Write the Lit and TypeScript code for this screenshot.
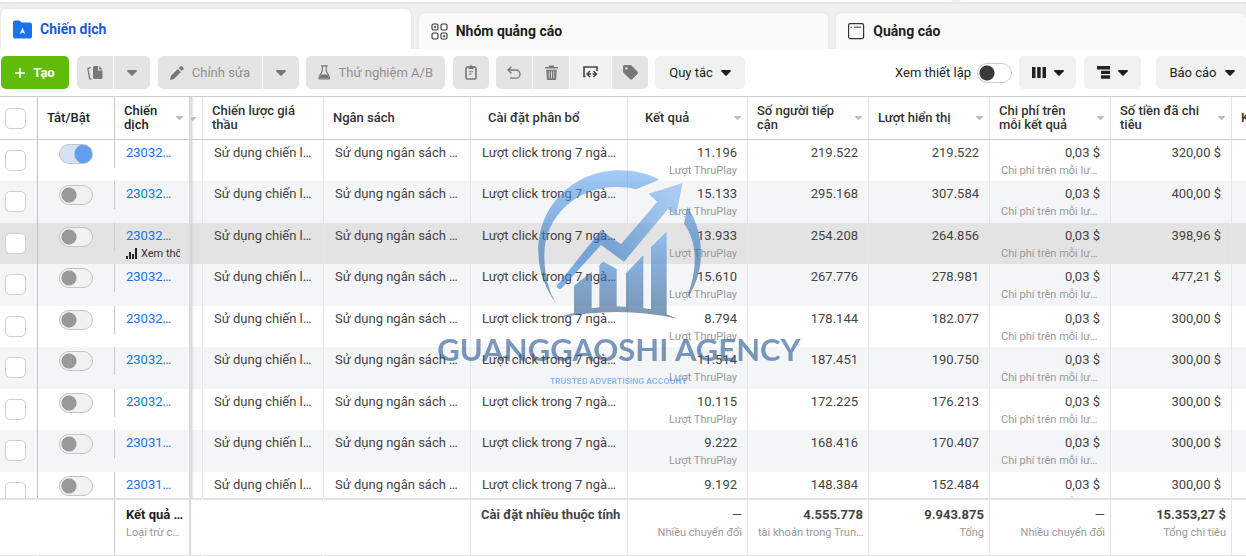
import { LitElement, html, css, svg, nothing } from "lit";
import { customElement, property, state } from "lit/decorators.js";
import { classMap } from "lit/directives/class-map.js";

interface Campaign {
  id: string;
  on: boolean;
  results: string;
  reach: string;
  impressions: string;
  spent: string;
}

const CAMPAIGNS: Campaign[] = [
  { id: "23032…", on: true, results: "11.196", reach: "219.522", impressions: "219.522", spent: "320,00 $" },
  { id: "23032…", on: false, results: "15.133", reach: "295.168", impressions: "307.584", spent: "400,00 $" },
  { id: "23032…", on: false, results: "13.933", reach: "254.208", impressions: "264.856", spent: "398,96 $" },
  { id: "23032…", on: false, results: "15.610", reach: "267.776", impressions: "278.981", spent: "477,21 $" },
  { id: "23032…", on: false, results: "8.794", reach: "178.144", impressions: "182.077", spent: "300,00 $" },
  { id: "23032…", on: false, results: "11.514", reach: "187.451", impressions: "190.750", spent: "300,00 $" },
  { id: "23032…", on: false, results: "10.115", reach: "172.225", impressions: "176.213", spent: "300,00 $" },
  { id: "23031…", on: false, results: "9.222", reach: "168.416", impressions: "170.407", spent: "300,00 $" },
  { id: "23031…", on: false, results: "9.192", reach: "148.384", impressions: "152.484", spent: "300,00 $" },
];

const icons = {
  folder: svg`<path d="M0 2.500A2 2 0 0 1 2 .5h4.500l2 2H17a2 2 0 0 1 2 2V16.500a2 2 0 0 1-2 2H2a2 2 0 0 1-2-2z" fill="#1a73e8"/><path d="M6.800 14 9.500 7.500 12.200 14 9.500 12.600z" fill="#fff"/>`,
  adset: svg`<g fill="none" stroke="#333" stroke-width="1.100"><rect x="1" y="1" width="6" height="6" rx="1.500"/><rect x="10" y="1" width="6" height="6" rx="1.500"/><rect x="1" y="10" width="6" height="6" rx="1.500"/><rect x="10" y="10" width="6" height="6" rx="1.500"/></g><path d="M3.200 3.200h1.800v1.800H3.200zM12.200 12.200h1.800v1.800h-1.800z" fill="#333"/>`,
  ad: svg`<rect x=".6" y=".6" width="15" height="15" rx="1.500" fill="none" stroke="#333" stroke-width="1.200"/><path d="M2.500 4.200h1.500M6 4.200h7" stroke="#333" stroke-width="1"/>`,
  plus: svg`<path d="M5 0v10M0 5h10" stroke="#fff" stroke-width="1.600"/>`,
  copy: svg`<path d="M6 1.500A1.500 1.500 0 0 1 7.500 0H11v4.500h4.500v7A1.500 1.500 0 0 1 14 13H7.500A1.500 1.500 0 0 1 6 11.500zM12 0l3.500 3.500H12z" fill="#777"/><path d="M4 1.600 1.800 2.100a1 1 0 0 0-.8 1.200l1.600 9a1 1 0 0 0 1.200.8l.8-.2" fill="none" stroke="#777" stroke-width="1.300"/>`,
  caret: svg`<path d="M.8 0h8.400a.8.8 0 0 1 .6 1.300L5.700 5.500a1 1 0 0 1-1.400 0L.2 1.300A.8.8 0 0 1 .8 0z" fill="currentColor"/>`,
  sort: svg`<path d="M.6 0h5.800a.5.5 0 0 1 .4.900L4 3.800a.7.7 0 0 1-1 0L.2.9A.5.5 0 0 1 .6 0z" fill="#bbbfc4"/>`,
  pencil: svg`<path d="M0 14l.9-4L8 2.900 11.100 6 4 13.100zM9 1.900 10.500.4a1.200 1.200 0 0 1 1.700 0l1.400 1.400a1.200 1.200 0 0 1 0 1.700L12.100 5z" fill="#777"/>`,
  flask: svg`<path d="M3 .7h7M4.500.7v5L1.200 12.300a1.200 1.200 0 0 0 1.100 1.900h8.400a1.200 1.200 0 0 0 1.100-1.900L8.500 5.700v-5" fill="none" stroke="#777" stroke-width="1.200"/><path d="M3.300 9.500h6.400l2 4.200H1.300z" fill="#777"/>`,
  clipboard: svg`<rect x="1" y="2" width="10" height="12" rx="1.500" fill="none" stroke="#777" stroke-width="1.600"/><path d="M3.500 1.500h1.200a1.300 1.300 0 0 1 2.600 0h1.200v2.500h-5z" fill="#777"/><path d="M4 6.800h4M4 9h2.500" stroke="#777" stroke-width="1.100"/>`,
  undo: svg`<path d="M4.500.8 1 4l3.500 3.200M1.200 4H9a4 4 0 0 1 4 4v.2a4 4 0 0 1-4 4H3" fill="none" stroke="#777" stroke-width="1.300"/>`,
  trash: svg`<path d="M0 2h4V.5h5V2h4v1.500H0zM1.200 4.800h10.600L11 15H2z" fill="#777"/><path d="M4.200 6.300v7M6.500 6.300v7M8.800 6.300v7" stroke="#e4e4e4" stroke-width=".9"/>`,
  swap: svg`<path d="M1.500 10.500H1V1h13v4M1 10.500h1.500" fill="none" stroke="#444" stroke-width="1.600"/><path d="M7 5 4 8l3 3M4.300 8H8M10.500 5l3 3-3 3M13.200 8H9.500" fill="none" stroke="#444" stroke-width="1.400"/>`,
  tag: svg`<path d="M0 1.500A1.500 1.500 0 0 1 1.500 0h5.600a2 2 0 0 1 1.400.6l5.900 5.900a1.700 1.700 0 0 1 0 2.400l-5 5a1.700 1.700 0 0 1-2.400 0L.6 8A2 2 0 0 1 0 6.600z" fill="#777"/><circle cx="3.400" cy="3.400" r="1.200" fill="#e4e4e4"/>`,
  columns: svg`<path d="M0 0h3.500v11H0zM5.200 0h3.500v11H5.200zM10.500 0H14v11h-3.500z" fill="#222"/>`,
  breakdown: svg`<path d="M0 0h13v3.500H0zM4 4.800h9V8H4zM4 9.300h9v3.500H4z" fill="#222"/>`,
  chart: svg`<path d="M0 8h2v3H0zM3 4h2v7H3zM6 6h2v5H6zM9 0h2v11H9z" fill="#222"/>`,
};

function icon(shape: unknown, w: number, h: number) {
  return html`<svg width=${w} height=${h} viewBox="0 0 ${w} ${h}" aria-hidden="true">${shape}</svg>`;
}

const caret = () => icon(icons.caret, 10, 6);

@customElement("brand-watermark")
export class BrandWatermark extends LitElement {
  static styles = css`
    :host { display: block; opacity: 0.6; }
    svg { display: block; margin: 0 auto; }
    .name { font: 700 93px Lato, sans-serif; fill: #225690; }
    .motto { font: 700 24px Inter, sans-serif; fill: #4596f8; }
  `;

  render() {
    return html`<svg width="400" height="250" viewBox="0 0 1200 750" aria-hidden="true">
      <defs>
        <linearGradient id="ring" gradientUnits="userSpaceOnUse" x1="0" y1="88" x2="0" y2="533">
          <stop offset="0" stop-color="#66a8f0" />
          <stop offset=".45" stop-color="#3379c6" />
          <stop offset="1" stop-color="#2a5380" />
        </linearGradient>
        <linearGradient id="arrow" gradientUnits="userSpaceOnUse" x1="412" y1="440" x2="788" y2="126">
          <stop offset="0" stop-color="#2c80e4" />
          <stop offset=".4" stop-color="#2f78c8" />
          <stop offset="1" stop-color="#82b8f4" />
        </linearGradient>
        <linearGradient id="bars" gradientUnits="userSpaceOnUse" x1="0" y1="290" x2="0" y2="533">
          <stop offset="0" stop-color="#5a9df0" />
          <stop offset=".4" stop-color="#3a7cc4" />
          <stop offset="1" stop-color="#28507c" />
        </linearGradient>
      </defs>
      <g transform="translate(-9 0)">
        <path fill="url(#ring)" d="M410 490C378 445 355 395 355 330 355 190 465 88 599 88c42 0 85 10 119 28l-70 29c-18-5-38-7-58-7-125 0-217 92-217 205 0 57 12 107 37 147z" />
        <path fill="url(#ring)" d="M802 198c28 40 41 90 41 137 0 50-13 95-43 140 15-45 26-85 24-130-1-35-12-70-32-97z" />
        <path fill="url(#arrow)" d="M412 432 543 268l60 42 109-128-26-24 102-32-20 98-24-20-132 158-69-50-118 130c-6 6-18-2-13-10z" />
        <path fill="url(#bars)" d="M415 530c18-6 34-11 47-14v-82l53-42v110l23-3V372l12-10 40 22v112l28 1V397l52-54v158l23 4V318l47-46v248l32 13c-120-28-240-25-357-3z" />
        <text class="name" x="52" y="660">GUANGGAOSHI AGENCY</text>
        <text class="motto" x="390" y="728">TRUSTED ADVERTISING ACCOUNT</text>
      </g>
    </svg>`;
  }
}

@customElement("level-tabs")
export class LevelTabs extends LitElement {
  static styles = css`
    :host { display: block; background: #f0f0f0; }
    .strip { display: grid; grid-template-columns: 952fr 286fr; gap: 8px; height: 2px; border-bottom: 2px solid #e6e6e6; }
    .strip span { background: #fff; border-radius: 0 0 4px 4px; }
    .tabs {
      display: grid; grid-template-columns: repeat(3, 1fr); column-gap: 8px; align-items: end;
      padding: 5px 0 0 1px;
    }
    .tab {
      display: flex; align-items: center; gap: 8px; height: 36px; padding: 0 12px; border: 0;
      border-radius: 6px 6px 0 0; background: #fafafa; color: #1c1e21;
      font: 700 14px/20px Roboto, sans-serif; box-shadow: 0 0 3px #dcdcdc; cursor: pointer;
    }
    .active { height: 40px; background: #fff; color: #1b5ad1; }
  `;

  @state() private active = 0;

  render() {
    const tabs = [
      ["Chiến dịch", icon(icons.folder, 19, 19)],
      ["Nhóm quảng cáo", icon(icons.adset, 17, 17)],
      ["Quảng cáo", icon(icons.ad, 17, 17)],
    ] as const;
    return html`
      <div class="strip"><span></span><span></span></div>
      <div class="tabs" role="tablist">
        ${tabs.map(([label, glyph], i) => html`
          <button class=${classMap({ tab: true, active: i === this.active })} role="tab"
            aria-selected=${i === this.active} @click=${() => (this.active = i)}>${glyph}<span>${label}</span></button>`)}
      </div>`;
  }
}

@customElement("action-bar")
export class ActionBar extends LitElement {
  static styles = css`
    :host {
      display: flex; justify-content: space-between; gap: 16px; overflow: hidden; padding: 7px 0 7px 1px;
      background: #fff; white-space: nowrap; font: 13px/17px Roboto, sans-serif; color: #1c1e21;
    }
    .side { display: flex; gap: 7px; flex: none; }
    .group { display: flex; gap: 1px; }
    .group > :not(:first-child) { border-top-left-radius: 0; border-bottom-left-radius: 0; }
    .group > :not(:last-child) { border-top-right-radius: 0; border-bottom-right-radius: 0; }
    button {
      display: flex; align-items: center; justify-content: center; gap: 8px; height: 33px; padding: 0 12px;
      border: 0; border-radius: 5px; background: #f1f1f1; color: inherit; font: inherit; cursor: pointer;
    }
    .create { width: 68px; background: #5fbc0b; color: #fff; font-weight: 700; }
    .off { background: #e4e4e4; color: #8f8f8f; }
    .off.square { color: #777; }
    .square { width: 36px; padding: 0; }
    .swap { width: 41px; }
    .pair { width: 57px; padding: 0; }
    .edit { width: 104px; }
    .test { width: 139px; }
    .rules { width: 90px; }
    .first { margin-right: 1px; }
    .report { width: 92px; margin-left: 8px; }
    .view { display: flex; align-items: center; gap: 6px; }
    .side.end { margin-right: -2px; }
    input {
      appearance: none; width: 35px; height: 20px; margin: 0; border: 1px solid #ccc; border-radius: 10px;
      background: radial-gradient(circle at 9px 9px, #3a3a3a 7px, transparent 8px) #fff;
    }
    input:checked { background: radial-gradient(circle at 24px 9px, #1a73e8 7px, transparent 8px) #fff; }
  `;

  render() {
    return html`
      <div class="side">
        <button class="create first">${icon(icons.plus, 10, 10)}Tạo</button>
        <div class="group first">
          <button class="off square" aria-label="Nhân bản">${icon(icons.copy, 16, 14)}</button>
          <button class="off square" aria-label="Tùy chọn nhân bản">${caret()}</button>
        </div>
        <div class="group">
          <button class="off edit">${icon(icons.pencil, 14, 14)}Chỉnh sửa</button>
          <button class="off square" aria-label="Tùy chọn chỉnh sửa">${caret()}</button>
        </div>
        <button class="off test first">${icon(icons.flask, 13, 15)}Thử nghiệm A/B</button>
        <button class="off square" aria-label="Sao chép">${icon(icons.clipboard, 12, 15)}</button>
        <div class="group">
          <button class="off square" aria-label="Hoàn tác">${icon(icons.undo, 14, 14)}</button>
          <button class="off square" aria-label="Xóa">${icon(icons.trash, 13, 15)}</button>
          <button class="square swap" aria-label="Xuất và nhập">${icon(icons.swap, 15, 13)}</button>
          <button class="off square" aria-label="Gắn nhãn">${icon(icons.tag, 15, 15)}</button>
        </div>
        <button class="rules">Quy tắc ${caret()}</button>
      </div>
      <div class="side end">
        <label class="view">Xem thiết lập <input type="checkbox" role="switch" /></label>
        <button class="pair first" aria-label="Cột">${icon(icons.columns, 14, 11)}${caret()}</button>
        <button class="pair" aria-label="Số liệu chi tiết">${icon(icons.breakdown, 13, 13)}${caret()}</button>
        <button class="report">Báo cáo ${caret()}</button>
      </div>`;
  }
}

@customElement("campaign-table")
export class CampaignTable extends LitElement {
  static styles = css`
    :host { display: block; overflow: auto; scrollbar-width: none; border-top: 1px solid #ccc; }
    table {
      width: 1362px; table-layout: fixed; border-collapse: separate; border-spacing: 0;
      font: 13px/18px Roboto, sans-serif; color: #444;
    }
    .w-check { width: 38px; } .w-switch { width: 77px; } .w-name { width: 76px; } .w-gap { width: 12px; }
    .w-m { width: 121px; } .w-budget { width: 147px; } .w-attr { width: 157px; } .w-n { width: 120px; }
    th, td {
      box-sizing: border-box; padding: 4px 10px 0 11px; border-right: 1px solid #e4e5e8; overflow: hidden;
      text-align: left; vertical-align: top; white-space: nowrap; font-weight: 400;
    }
    thead th {
      position: sticky; top: 0; z-index: 2; height: 43px; padding: 0 9px; border-bottom: 1px solid #ccc;
      background: #fff; vertical-align: middle; white-space: normal; font-size: 13px; line-height: 14px;
      font-weight: 500; color: #333;
    }
    .head { display: flex; align-items: center; justify-content: space-between; gap: 10px; }
    .head svg { flex: none; margin-right: -3px; }
    thead .inset { padding-left: 17px; }
    tbody tr { height: 41px; }
    tbody tr:nth-child(even) { height: 42px; }
    tbody td { height: inherit; background: #fff; }
    .tint td { background-color: #f4f5f7; }
    .hover td { background-color: #e3e3e3; }
    .num { padding-right: 10px; text-align: right; }
    .sub { display: block; height: 17px; font-size: 11px; line-height: 17px; color: #999; }
    .short { padding-right: 3px; }
    .freeze { position: sticky; z-index: 1; }
    thead .freeze { z-index: 3; color: #1c1e21; }
    .f1 { left: 0; padding: 10px 0 0 5px; border-right-color: #c4c4c4; }
    .f2 { left: 38px; padding: 4px 2px 0 0; text-align: center; }
    .f3 { left: 115px; border-right: 2px solid #dcdcdc; }
    tbody .f2 {
      border-right: 0; background-image: linear-gradient(#ccc, #ccc);
      background-size: 1px 28px; background-position: 100% 0; background-repeat: no-repeat;
    }
    thead .f1 { padding: 0 0 0 5px; }
    thead .f2 { padding: 0 9px; text-align: left; border-right-color: #ccc; }
    tfoot .f2 { border-right-color: #ccc; }
    .gap, thead .gap { padding: 0; box-shadow: inset 3px 0 3px -2px #ccc; }
    .gap svg { display: block; margin: 2px 0 0 -2px; }
    a { color: #1a73e8; text-decoration: none; }
    .view { display: flex; gap: 4px; align-items: center; height: 17px; overflow: hidden; padding: 0; border: 0;
      width: 54px; background: none; font: 11px/17px Roboto, sans-serif; color: #333; }
    .view svg { flex: none; }
    .box {
      appearance: none; display: block; box-sizing: border-box; width: 21px; height: 21px; margin: 0;
      border: 1px solid #d0d0d0; border-radius: 5px; background: #fff;
    }
    .box:checked { background: #1a73e8; }
    .switch {
      appearance: none; box-sizing: border-box; width: 34px; height: 20px; margin: 0; border: 1px solid #c4c4c4;
      border-radius: 10px; vertical-align: top;
      background: radial-gradient(circle at 9px 9px, #999 7px, transparent 8px) #f1f1f1;
    }
    .switch:checked { background: radial-gradient(circle at 24px 9px, #619eef 9px, transparent 10px) #d5e2f4; }
    .thumb { display: block; width: 17px; height: 17px; margin: 1px 0 0 3px; border-radius: 2px; background: #bbb; }
    tfoot td {
      position: sticky; bottom: 0; z-index: 2; height: 58px; padding: 6px 5px 0 10px; background: #fff;
      border-top: 2px solid #e0e1e3; border-bottom: 1px solid #e0e1e3; font-weight: 700;
    }
    tfoot .num { padding-right: 5px; }
    tfoot .freeze { z-index: 3; }
    tfoot .f3 { padding: 6px 0 0 11px; color: #1c1e21; }
    tfoot .sub { font-weight: 400; }
    tfoot .plain { border-right-color: transparent; }
    tfoot .dash { font-weight: 400; }
  `;

  @property({ attribute: false }) rows: Campaign[] = [];

  private head(label: string, sort = true) {
    return html`<span class="head">${label}${sort ? icon(icons.sort, 7, 4) : nothing}</span>`;
  }

  private row(c: Campaign, i: number) {
    const hover = i === 2;
    const tint = !hover && (i === 3 || i % 2 === 1);
    return html`<tr class=${classMap({ tint, hover })}>
      <td class="freeze f1"><input class="box" type="checkbox" aria-label="Chọn chiến dịch ${i + 1}" /></td>
      <td class="freeze f2"><input class="switch" type="checkbox" role="switch" aria-label="Bật chiến dịch ${i + 1}" .checked=${c.on} /></td>
      <td class="freeze f3"><a href="#campaign">${c.id}</a>
        ${hover ? html`<button class="view">${icon(icons.chart, 11, 11)}<span>Xem thống kê</span></button>` : nothing}</td>
      <td class="gap"></td>
      <td>Sử dụng chiến l…</td>
      <td>Sử dụng ngân sách …</td>
      <td>Lượt click trong 7 ngà…</td>
      <td class="num">${c.results}<span class="sub">Lượt ThruPlay</span></td>
      <td class="num">${c.reach}</td>
      <td class="num">${c.impressions}</td>
      <td class="num">${"0,03 $"}<span class="sub short">Chi phí trên mỗi lư…</span></td>
      <td class="num">${c.spent}</td>
      <td>${i === 0 ? html`<span class="thumb"></span>` : nothing}</td>
    </tr>`;
  }

  render() {
    return html`<table>
      <colgroup>
        <col class="w-check" /><col class="w-switch" /><col class="w-name" /><col class="w-gap" />
        <col class="w-m" /><col class="w-budget" /><col class="w-attr" /><col class="w-n" />
        <col class="w-m" /><col class="w-m" /><col class="w-m" /><col class="w-m" /><col />
      </colgroup>
      <thead><tr>
        <th class="freeze f1"><input class="box" type="checkbox" aria-label="Chọn tất cả" /></th>
        <th class="freeze f2">Tắt/Bật</th>
        <th class="freeze f3">${this.head("Chiến dịch")}</th>
        <th class="gap">${icon(icons.sort, 7, 4)}</th>
        <th>${this.head("Chiến lược giá thầu", false)}</th>
        <th>Ngân sách</th>
        <th class="inset">Cài đặt phân bổ</th>
        <th class="inset">${this.head("Kết quả")}</th>
        <th>${this.head("Số người tiếp cận")}</th>
        <th>${this.head("Lượt hiển thị")}</th>
        <th>${this.head("Chi phí trên mỗi kết quả")}</th>
        <th>${this.head("Số tiền đã chi tiêu")}</th>
        <th>Kết thúc</th>
      </tr></thead>
      <tbody>${this.rows.map((c, i) => this.row(c, i))}</tbody>
      <tfoot><tr>
        <td class="freeze f1 plain"></td>
        <td class="freeze f2"></td>
        <td class="freeze f3">Kết quả …<span class="sub">Loại trừ c…</span></td>
        <td class="plain"></td><td class="plain"></td><td></td>
        <td>Cài đặt nhiều thuộc tính</td>
        <td class="num"><span class="dash">—</span><span class="sub">Nhiều chuyển đổi</span></td>
        <td class="num">4.555.778<span class="sub">tài khoản trong Trun…</span></td>
        <td class="num">9.943.875<span class="sub">Tổng</span></td>
        <td class="num"><span class="dash">—</span><span class="sub">Nhiều chuyển đổi</span></td>
        <td class="num">15.353,27 $<span class="sub">Tổng chi tiêu</span></td>
        <td></td>
      </tr></tfoot>
    </table>`;
  }
}

@customElement("app-root")
export class AppRoot extends LitElement {
  static styles = css`
    :host { display: flex; flex-direction: column; height: 100vh; overflow: hidden; background: #fff; }
    level-tabs, action-bar { flex: none; }
    .data { position: relative; flex: 1; min-height: 0; display: flex; }
    campaign-table { flex: 1; min-width: 0; }
    brand-watermark { position: absolute; z-index: 5; top: 45px; left: 0; right: 0; pointer-events: none; }
  `;

  render() {
    return html`
      <level-tabs></level-tabs>
      <action-bar></action-bar>
      <main class="data">
        <campaign-table .rows=${CAMPAIGNS}></campaign-table>
        <brand-watermark></brand-watermark>
      </main>`;
  }
}
